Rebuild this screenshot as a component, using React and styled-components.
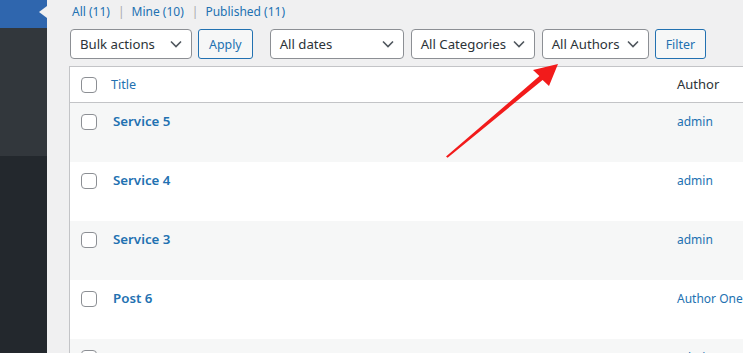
import React from "react";
import styled, { createGlobalStyle } from "styled-components";

const GlobalStyle = createGlobalStyle`
  html, body {
    margin: 0;
    padding: 0;
    height: 353px;
    overflow: hidden;
    background: #f0f0f1;
  }
  body {
    font-family: "Segoe UI", "Noto Sans", sans-serif;
    color: #3c434a;
  }
`;

const Page = styled.div`
  position: relative;
  display: flex;
  height: 353px;
  overflow: hidden;
`;

const Sidebar = styled.div`
  width: 47px;
  flex: 0 0 47px;
  display: flex;
  flex-direction: column;
  background: #23282d;
  .active {
    position: relative;
    height: 28px;
    background: #2f66ae;
  }
  .active::after {
    content: "";
    position: absolute;
    right: 0;
    top: 6px;
    border: 6px solid transparent;
    border-right: 8px solid #f0f0f1;
    border-left: 0;
  }
  .submenu {
    height: 128px;
    background: #32373c;
  }
`;

const Main = styled.div`
  flex: 1;
  min-width: 0;
  padding-left: 22px;
  overflow: hidden;
`;

const Subsub = styled.ul`
  display: flex;
  margin: 0;
  padding: 2px 0 0 3px;
  list-style: none;
  font-size: 12px;
  line-height: 20px;
  color: #a7aaad;
  li + li::before {
    content: "|";
    margin: 0 7px 0 8px;
  }
  a {
    color: #2271b1;
    text-decoration: none;
  }
`;

const Toolbar = styled.div`
  display: flex;
  align-items: center;
  gap: 6px;
  margin: 7px 0 0 1px;
  height: 30px;
`;

const SelectBox = styled.div`
  box-sizing: border-box;
  display: flex;
  align-items: center;
  justify-content: space-between;
  gap: 4px;
  width: ${(p) => p.$w}px;
  height: 30px;
  margin-left: ${(p) => p.$gap || 0}px;
  padding: 0 9px 0 9px;
  border: 1px solid #8c8f94;
  border-radius: 4px;
  background: #fff;
  font-size: 13.2px;
  color: #2c3338;
  white-space: nowrap;
  svg {
    flex: none;
  }
`;

const Button = styled.button`
  box-sizing: border-box;
  height: 30px;
  padding: 0 10px;
  border: 1px solid #2271b1;
  border-radius: 3px;
  background: #f6f7f7;
  color: #2271b1;
  font-family: inherit;
  font-size: 12.4px;
`;

const Table = styled.div`
  width: 820px;
  margin-top: 7px;
  border: 1px solid #c3c4c7;
  background: #fff;
`;

const Row = styled.div`
  display: grid;
  grid-template-columns: 41px 566px 1fr;
  box-sizing: border-box;
  height: ${(p) => (p.$head ? 36 : 59)}px;
  align-items: ${(p) => (p.$head ? "center" : "start")};
  background: ${(p) => (p.$alt ? "#f6f7f7" : "#fff")};
  border-bottom: ${(p) => (p.$head ? "1px solid #c3c4c7" : "none")};
`;

const CheckCell = styled.div`
  padding: ${(p) => (p.$head ? "0" : "11px")} 0 0 11px;
  line-height: 0;
`;

const Checkbox = styled.span`
  display: inline-block;
  box-sizing: border-box;
  width: 16px;
  height: 16px;
  border: 1px solid #8c8f94;
  border-radius: 4px;
  background: #fff;
`;

const TitleLink = styled.a`
  padding: ${(p) => (p.$head ? "0" : "8px 0 0 2px")};
  font-size: ${(p) => (p.$head ? 12.6 : 13.3)}px;
  line-height: 20px;
  font-weight: ${(p) => (p.$head ? 400 : 600)};
  color: #2271b1;
  text-decoration: none;
`;

const AuthorCell = styled.div`
  padding-top: ${(p) => (p.$head ? 0 : 9)}px;
  line-height: 19px;
  white-space: nowrap;
  color: ${(p) => (p.$head ? "#2c3338" : "#2271b1")};
  font-size: ${(p) => (p.$head ? 13 : 12)}px;
`;

const Arrow = styled.svg`
  position: absolute;
  left: 0;
  top: 0;
  pointer-events: none;
`;

const Chevron = () => (
  <svg width="12" height="8" viewBox="0 0 12 8">
    <path d="M1 1.5l5 5 5-5" fill="none" stroke="#50575e" strokeWidth="1.6" />
  </svg>
);

const posts = [
  { title: "Service 5", author: "admin" },
  { title: "Service 4", author: "admin" },
  { title: "Service 3", author: "admin" },
  { title: "Post 6", author: "Author One" },
  { title: "Post 5", author: "admin" },
];

export default function App() {
  return (
    <>
      <GlobalStyle />
      <Page>
        <Sidebar>
          <div className="active" />
          <div className="submenu" />
        </Sidebar>
        <Main>
          <Subsub>
            <li><a href="#">All (11)</a></li>
            <li><a href="#">Mine (10)</a></li>
            <li><a href="#">Published (11)</a></li>
          </Subsub>
          <Toolbar>
            <SelectBox $w={122}>Bulk actions<Chevron /></SelectBox>
            <Button>Apply</Button>
            <SelectBox $w={134} $gap={11}>All dates<Chevron /></SelectBox>
            <SelectBox $w={124} $gap={1}>All Categories<Chevron /></SelectBox>
            <SelectBox $w={107} $gap={1}>All Authors<Chevron /></SelectBox>
            <Button>Filter</Button>
          </Toolbar>
          <Table>
            <Row $head>
              <CheckCell $head><Checkbox /></CheckCell>
              <TitleLink $head href="#">Title</TitleLink>
              <AuthorCell $head>Author</AuthorCell>
            </Row>
            {posts.map((p, i) => (
              <Row key={p.title} $alt={i % 2 === 0}>
                <CheckCell><Checkbox /></CheckCell>
                <TitleLink href="#">{p.title}</TitleLink>
                <AuthorCell>{p.author}</AuthorCell>
              </Row>
            ))}
          </Table>
        </Main>
        <Arrow width="743" height="353" viewBox="0 0 743 353">
          <polygon
            points="446,156.6 539.4,76.1 533,70 558,64 549,86 542.6,79.9 447.6,157.8"
            fill="#f21b1b"
          />
        </Arrow>
      </Page>
    </>
  );
}
